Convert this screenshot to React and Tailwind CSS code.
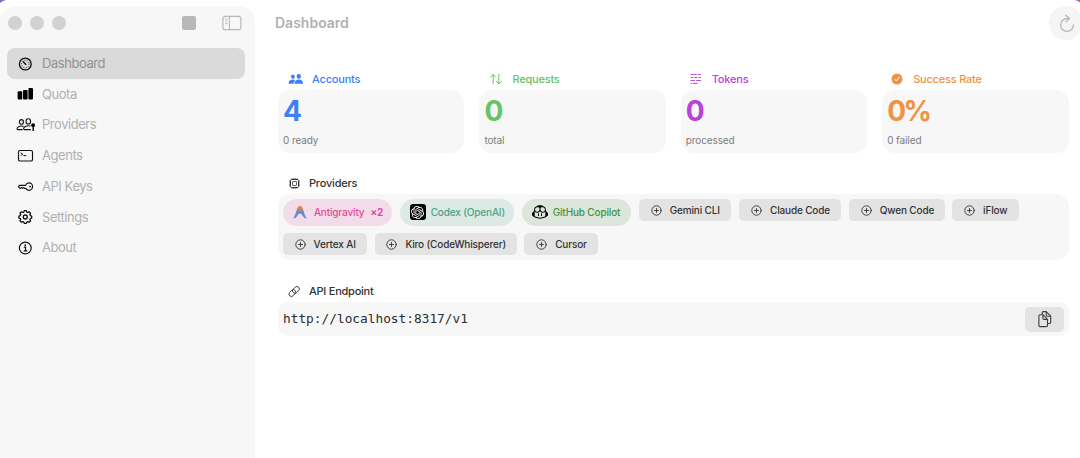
import { SiOpenai } from 'react-icons/si'
import { GoCopilot } from 'react-icons/go'

const GaugeIcon = () => (
  <svg width="20" height="16" viewBox="0 0 20 16" fill="none" stroke="#111" strokeLinecap="round">
    <circle cx="10.3" cy="8" r="5.9" strokeWidth="1.3" />
    <circle cx="10.3" cy="8" r="3.8" strokeWidth="0.9" strokeDasharray="0.2 2.2" />
    <path d="M8.3 5.8 10.6 8.3" strokeWidth="1.3" />
    <circle cx="10.7" cy="8.4" r="0.7" fill="#111" stroke="none" />
  </svg>
)

const BarsIcon = () => (
  <svg width="20" height="16" viewBox="0 0 20 16" fill="#000">
    <rect x="2.6" y="5.3" width="4.6" height="8.2" rx="1" />
    <rect x="8" y="3.9" width="4.6" height="9.6" rx="1" />
    <rect x="13.4" y="2.1" width="4.6" height="11.4" rx="1" />
  </svg>
)

const PeopleKeyIcon = () => (
  <svg width="20" height="16" viewBox="0 0 20 16" fill="none" stroke="#111" strokeWidth="1.1" strokeLinejoin="round">
    <ellipse cx="6.4" cy="4.9" rx="2" ry="2.3" />
    <ellipse cx="13.3" cy="4.4" rx="2.3" ry="2.6" />
    <path d="M7.5 12.6H2.9c-1.6 0-.9-3.6 3.5-3.6.9 0 1.6.2 2.2.5" />
    <path d="M15.8 12.6H9.5c-1.7 0-1-3.9 3.9-3.9 1 0 1.8.2 2.1.5" />
    <circle cx="18.1" cy="8.2" r="1.9" fill="#000" stroke="none" />
    <path d="M18.2 9v5" stroke="#000" strokeWidth="1.4" />
  </svg>
)

const TerminalIcon = () => (
  <svg width="20" height="16" viewBox="0 0 20 16" fill="none" stroke="#111" strokeLinecap="round" strokeLinejoin="round">
    <rect x="3.5" y="2.5" width="14" height="10.5" rx="1.6" strokeWidth="1.15" />
    <path d="m6 5 1.7 1.2L6 7.4M8.8 7.6h2" strokeWidth="1" />
  </svg>
)

const KeyIcon = () => (
  <svg width="20" height="16" viewBox="0 0 20 16" fill="none" stroke="#111" strokeWidth="1.15" strokeLinejoin="round">
    <path d="M10.6 6.4H4.5L3.3 7.6l1.4 1.5h1.1l.9-.7.9 1 1-.8.9.7h1.2c.7 1.3 1.8 2 3.3 2a3.6 3.7 0 1 0 0-7.4c-1.7 0-2.7.8-3.4 2.5Z" />
    <circle cx="15" cy="7.6" r="0.9" fill="#111" stroke="none" />
  </svg>
)

const GearIcon = () => (
  <svg width="20" height="16" viewBox="0 0 20 16" fill="none" stroke="#111" strokeWidth="1.3" strokeLinejoin="round">
    <path d="M9.2 1.7h2.2l.4 1.4 1 .4 1.3-.7 1.5 1.5-.7 1.3.4 1 1.4.4v2.1l-1.4.4-.4 1 .7 1.3-1.5 1.5-1.3-.7-1 .4-.4 1.4H9.2l-.4-1.4-1-.4-1.3.7L5 11.8l.7-1.3-.4-1-1.4-.4V7l1.4-.4.4-1L5 4.3l1.5-1.5 1.3.7 1-.4Z" />
    <circle cx="10.3" cy="8" r="2" />
  </svg>
)

const InfoIcon = () => (
  <svg width="20" height="16" viewBox="0 0 20 16" fill="none" stroke="#111" strokeLinecap="round">
    <circle cx="10.3" cy="8" r="5.9" strokeWidth="1.2" />
    <circle cx="10.2" cy="5.1" r="0.9" fill="#111" stroke="none" />
    <path d="M9.3 7.2h1.2v3.6M9.1 10.9h2.8" strokeWidth="1.2" />
  </svg>
)

const AccountsIcon = () => (
  <svg width="16" height="12" viewBox="0 0 16 12" fill="currentColor">
    <ellipse cx="4.9" cy="3.6" rx="1.9" ry="2.2" />
    <path d="M1.2 10.8c-1.2 0-.6-4.2 3.7-4.2 1.1 0 1.8.3 2.3.6-1 .9-1.6 2.2-1.5 3.6Z" />
    <ellipse cx="10.8" cy="3.2" rx="2.1" ry="2.5" />
    <path d="M7.3 10.8c-1.5 0-.9-4.4 3.5-4.4s5 4.4 3.5 4.4Z" />
  </svg>
)

const ArrowsIcon = () => (
  <svg width="16" height="12" viewBox="0 0 16 12" fill="none" stroke="currentColor" strokeWidth="1" strokeLinecap="round" strokeLinejoin="round">
    <path d="M5.2 10.9V1.5M2.6 4.1l2.6-2.7 2.6 2.7M10.8 1.4v9.3M8.2 8.2l2.6 2.7 2.6-2.7" />
  </svg>
)

const TokensIcon = () => (
  <svg width="16" height="12" viewBox="0 0 16 12" fill="none" stroke="currentColor" strokeWidth="0.9">
    <path d="M2.5 1.5h6M9.5 1.5h3.6M2.5 4.5h2.6M6.1 4.5h3.2M10.2 4.5h2.8M2.5 7.5h4.6M8.1 7.5h5M2.5 10.5h1.6M5 10.5h4.6" />
  </svg>
)

const CheckSealIcon = () => (
  <svg width="16" height="12" viewBox="0 0 16 12">
    <circle cx="8" cy="6" r="5.5" fill="currentColor" />
    <path d="m5.9 6.3 1.5 1.7 2.8-4" fill="none" stroke="#fff" strokeWidth="1" strokeLinecap="round" strokeLinejoin="round" />
  </svg>
)

const CpuIcon = () => (
  <svg width="12" height="13" viewBox="0 0 12 13" fill="none" stroke="#333">
    <rect x="2.5" y="2.5" width="8" height="8" rx="1.2" strokeWidth="1" />
    <rect x="4.5" y="4.5" width="4" height="4" rx="0.6" strokeWidth="0.8" />
    <path d="M4 1.2v1M5.7 1.2v1M7.3 1.2v1M9 1.2v1M4 10.8v1M5.7 10.8v1M7.3 10.8v1M9 10.8v1M1.2 4h1M1.2 5.7h1M1.2 7.3h1M1.2 9h1M10.8 4h1M10.8 5.7h1M10.8 7.3h1M10.8 9h1" strokeWidth="0.8" />
  </svg>
)

const LinkIcon = () => (
  <svg width="12" height="13" viewBox="0 0 12 13" fill="none" stroke="#333" strokeWidth="0.9">
    <rect x="-3.8" y="-2.4" width="7.6" height="4.8" rx="2.4" transform="translate(4.4 8.1) rotate(-45)" />
    <rect x="-3.8" y="-2.4" width="7.6" height="4.8" rx="2.4" transform="translate(7.9 4.9) rotate(-45)" />
  </svg>
)

const PlusCircle = () => (
  <svg width="11" height="11" viewBox="0 0 11 11" fill="none" stroke="#333" strokeLinecap="round" className="shrink-0">
    <circle cx="5.5" cy="5.5" r="4.7" strokeWidth="0.9" />
    <path d="M5.5 3.5v4M3.5 5.5h4" strokeWidth="0.9" />
  </svg>
)

const AntigravityIcon = () => (
  <svg width="14" height="14" viewBox="0 0 14 14" className="shrink-0">
    <defs>
      <linearGradient id="arc" x1="0" y1="0" x2="0" y2="1">
        <stop offset="0" stopColor="#ee7d45" />
        <stop offset="0.28" stopColor="#b98a66" />
        <stop offset="0.5" stopColor="#6b82d8" />
        <stop offset="1" stopColor="#4c91ef" />
      </linearGradient>
      <linearGradient id="green" x1="0" y1="0" x2="1" y2="0">
        <stop offset="0" stopColor="#57ad73" stopOpacity="0.9" />
        <stop offset="0.5" stopColor="#57ad73" stopOpacity="0" />
      </linearGradient>
    </defs>
    <path d="M.4 13.2C3.1 10.6 3.5.8 7 .8s3.9 9.8 6.6 12.4c-.9.8-2 .2-3-1.1C9.2 10.3 8.7 8.6 7 8.6s-2.2 1.700-3.6 3.5c-1 1.300-2.1 1.900-3 1.100Z" fill="url(#arc)" />
    <path d="M3.5 7.5C4.3 4.5 4.9.8 7 .8v7.8c-1 0-1.7.7-2.3 1.600Z" fill="url(#green)" />
  </svg>
)

const DocsIcon = () => (
  <svg width="16" height="18" viewBox="0 0 16 18" fill="none" stroke="#3c3c3c" strokeWidth="1.1" strokeLinejoin="round">
    <path d="M5.2 4.6V2.8c0-.8.5-1.2 1.2-1.2h2.8l4.5 4.6v6.1c0 .8-.5 1.2-1.2 1.2h-1.9" />
    <path d="M9.2 1.8v3.3c0 .7.4 1.1 1.1 1.1h3.3" />
    <path d="M3.1 4.7h2.8l4.6 4.7v6c0 .8-.5 1.2-1.2 1.2H3.1c-.8 0-1.2-.4-1.2-1.2V5.9c0-.8.4-1.2 1.2-1.2Z" />
    <path d="M5.9 4.9v3.4c0 .7.4 1.1 1.1 1.1h3.3" />
  </svg>
)

const nav = [
  { label: 'Dashboard', icon: <GaugeIcon />, active: true },
  { label: 'Quota', icon: <BarsIcon /> },
  { label: 'Providers', icon: <PeopleKeyIcon /> },
  { label: 'Agents', icon: <TerminalIcon /> },
  { label: 'API Keys', icon: <KeyIcon /> },
  { label: 'Settings', icon: <GearIcon /> },
  { label: 'About', icon: <InfoIcon /> },
]

const stats = [
  { label: 'Accounts', value: '4', note: '0 ready', icon: <AccountsIcon />, color: 'text-[#3b82f6]', inset: 'pl-2.5' },
  { label: 'Requests', value: '0', note: 'total', icon: <ArrowsIcon />, color: 'text-[#65c466]', inset: 'pl-[9px]' },
  { label: 'Tokens', value: '0', note: 'processed', icon: <TokensIcon />, color: 'text-[#bb40dc]', inset: 'pl-[7px]' },
  { label: 'Success Rate', value: '0%', note: '0 failed', icon: <CheckSealIcon />, color: 'text-[#f09241]', inset: 'pl-[7px]' },
]

const available = [
  { label: 'Gemini CLI', width: 'w-[92.5px]' },
  { label: 'Claude Code', width: 'w-[102px]' },
  { label: 'Qwen Code', width: 'w-[95.5px]' },
  { label: 'iFlow', width: 'w-[66.5px]' },
  { label: 'Vertex AI', width: 'w-[84px]' },
  { label: 'Kiro (CodeWhisperer)', width: 'w-[142px]' },
  { label: 'Cursor', width: 'w-[74px]' },
]

function Sidebar() {
  return (
    <aside className="mt-1.5 h-[452px] w-[255px] shrink-0 rounded-t-2xl bg-[#f7f7f7]">
      <div className="flex h-[34px] items-center pl-2">
        <div className="flex gap-2">
          <span className="size-3.5 rounded-full bg-[#d2d2d2]" />
          <span className="size-3.5 rounded-full bg-[#d2d2d2]" />
          <span className="size-3.5 rounded-full bg-[#d2d2d2]" />
        </div>
        <span className="ml-[116px] size-[13.5px] rounded-[2px] bg-[#b8b8b8]" />
        <svg className="ml-[26.5px]" width="20" height="16" viewBox="0 0 20 16" fill="none" stroke="#b9b9b9">
          <rect x="0.9" y="1.3" width="18" height="13.4" rx="2.5" strokeWidth="1.2" />
          <path d="M7.4 1.3v13.4" strokeWidth="1.1" />
          <path d="M3 4.1h2.4M3 6.3h2.4M3 8.5h2.4" strokeWidth="0.9" />
        </svg>
      </div>
      <nav className="mt-2 px-[7px]">
        {nav.map(item => (
          <div
            key={item.label}
            className={`flex h-[30.75px] w-[238px] items-center rounded-lg pt-[0.5px] pl-2 text-[13px] tracking-[-0.45px] ${item.active ? 'bg-[#dadada] text-[#919191]' : 'text-[#b0b0b0]'}`}
          >
            {item.icon}
            <span className="ml-[7px]">{item.label}</span>
          </div>
        ))}
      </nav>
    </aside>
  )
}

function StatCard({ stat }) {
  return (
    <div className="min-w-0 flex-1">
      <div className={`flex h-[21.5px] items-center text-[11px] font-medium tracking-[-0.2px] ${stat.inset} ${stat.color}`}>
        {stat.icon}
        <span className="ml-2">{stat.label}</span>
      </div>
      <div className="h-[63px] rounded-[13px] bg-[#f7f7f7] px-[5px]">
        <p className={`pt-[5px] text-[28px] leading-8 font-bold tracking-[-2.5px] ${stat.color}`}>{stat.value}</p>
        <p className="pt-[5.5px] text-[10px] leading-4 tracking-[-0.1px] text-[#7c7c7c]">{stat.note}</p>
      </div>
    </div>
  )
}

export default function App() {
  return (
    <div className="relative flex h-[458px] w-[1080px] overflow-hidden bg-white font-[Inter,sans-serif]">
      {/* desktop showing behind the window corners */}
      <svg className="absolute top-0 left-0" width="6" height="3" viewBox="0 0 6 3">
        <path d="M0 0h6Q2 .8 0 3Z" fill="#7471c8" />
      </svg>
      <svg className="absolute top-0 right-0" width="5" height="3" viewBox="0 0 5 3">
        <path d="M0 0h5v2.5Q3 .8 0 0Z" fill="#a96d96" />
      </svg>
      <Sidebar />
      <main className="w-[813px] pl-[23px]">
        <header className="flex h-[46px] items-center justify-between">
          <h1 className="-ml-[3px] pb-0.5 text-[14px] font-semibold text-[#b1b1b1]">Dashboard</h1>
          <button className="-mr-[15px] flex size-[34px] shrink-0 items-center justify-center rounded-full bg-[#f5f5f5] pl-0.5">
            <svg width="18" height="20" viewBox="0 0 18 20" fill="none" stroke="#b8b8b8" strokeWidth="1.3" strokeLinecap="round" strokeLinejoin="round">
              <path d="M10.8 5.6 9 5.5a6.4 6.4 0 1 0 6.4 6.4M7.8 2.2l3.7 3.4-3.7 3.3" />
            </svg>
          </button>
        </header>

        <section className="mt-[22px] flex w-[790.5px] gap-[15px]">
          {stats.map(stat => <StatCard key={stat.label} stat={stat} />)}
        </section>

        <section className="mt-[20.5px] w-[790.5px]">
          <h2 className="flex h-[21px] items-center pl-2.5 text-[11px] font-medium tracking-[-0.2px] text-[#333]">
            <CpuIcon />
            <span className="ml-[9px]">Providers</span>
          </h2>
          <div className="flex h-[66px] flex-wrap content-start items-start gap-x-[7.8px] gap-y-[7.5px] rounded-[13px] bg-[#f7f7f7] p-[5px] pl-[4.9px] text-[10px] font-medium tracking-[-0.15px]">
            <span className="flex h-[26.5px] w-[109.5px] items-center rounded-full bg-[#f3dce9] pl-2.5 text-[#e64a9c]">
              <AntigravityIcon />
              <span className="ml-[7px]">Antigravity</span>
              <span className="ml-1.5 font-bold">×2</span>
            </span>
            <span className="flex h-[26.5px] w-[114.2px] items-center rounded-full bg-[#dce9e4] pl-[9.5px] text-[#48a586]">
              <span className="flex size-4 shrink-0 items-center justify-center rounded-[3px] bg-black text-white">
                <SiOpenai size={13} />
              </span>
              <span className="ml-[5px] whitespace-nowrap">Codex (OpenAI)</span>
            </span>
            <span className="flex h-[26.5px] w-[109px] items-center rounded-full bg-[#dce6db] pl-[9.5px] text-[#44913f]">
              <GoCopilot size={16} color="#000" className="shrink-0" />
              <span className="ml-[5px] whitespace-nowrap">GitHub Copilot</span>
            </span>
            {available.map(p => (
              <button key={p.label} className={`flex h-[22px] items-center rounded-[5px] bg-[#e3e3e3] pl-[11.7px] whitespace-nowrap text-[#333] ${p.width}`}>
                <PlusCircle />
                <span className="ml-2">{p.label}</span>
              </button>
            ))}
          </div>
        </section>

        <section className="mt-[21px] w-[790.5px]">
          <h2 className="flex h-[21px] items-center pl-2.5 text-[11px] font-medium tracking-[-0.25px] text-[#333]">
            <LinkIcon />
            <span className="ml-[9px]">API Endpoint</span>
          </h2>
          <div className="flex h-[34px] items-center justify-between rounded-[10px] bg-[#f7f7f7] pr-[4.8px] pl-[5px]">
            <code className="font-['DejaVu_Sans_Mono',monospace] text-[12.8px] text-[#2c2c2c]">http://localhost:8317/v1</code>
            <button className="flex h-[25px] w-[39px] items-center justify-center rounded-[5px] bg-[#e3e3e3] pl-px">
              <DocsIcon />
            </button>
          </div>
        </section>
      </main>
    </div>
  )
}
